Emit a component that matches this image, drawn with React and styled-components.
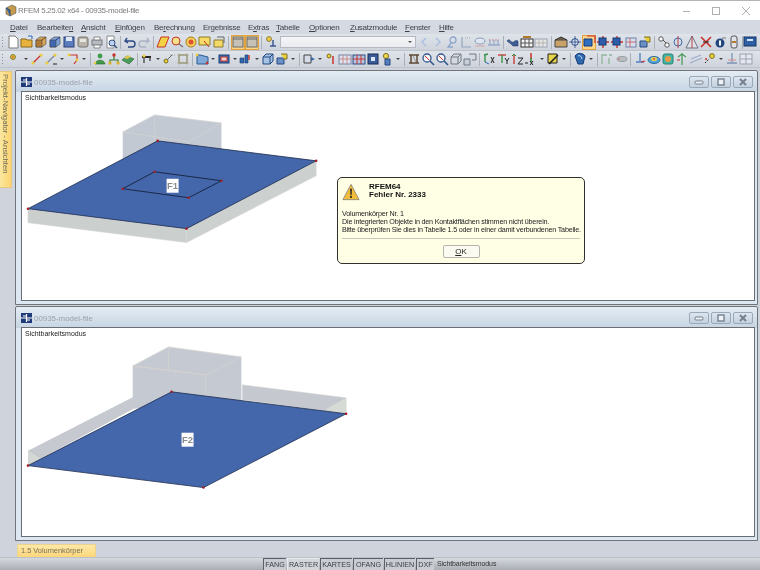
import React from 'react';
import styled, { createGlobalStyle } from 'styled-components';

const GlobalStyle = createGlobalStyle`
  html, body { margin: 0; padding: 0; background: #cfd4dc; }
  body { font-family: "Liberation Sans", Arial, sans-serif; overflow: hidden; }
`;

const Page = styled.div`
  width: 760px;
  height: 570px;
  display: flex;
  flex-direction: column;
  overflow: hidden;
  background: #cfd4dc;
  filter: blur(0.4px);
`;

const TitleBar = styled.div`
  height: 19px;
  flex: none;
  background: #fff;
  border-top: 1px solid #b4b4b4;
  display: flex;
  align-items: center;
  padding-left: 4px;
  color: #7d7d7d;
  font-size: 8px;
  letter-spacing: -0.35px;
`;

const AppTitle = styled.span`
  margin-left: 1px;
  flex: 1;
`;

const Caption = styled.div`
  width: 29px;
  height: 19px;
  display: flex;
  align-items: center;
  justify-content: center;
  margin-right: ${(p) => p.$gap || 0}px;
`;

const MenuBar = styled.div`
  height: 14px;
  flex: none;
  display: flex;
  align-items: center;
  padding-left: 10px;
  background: #d5dae2;
  font-size: 8px;
  letter-spacing: -0.25px;
  color: #3a3f48;
`;

const MenuItem = styled.span`
  width: ${(p) => p.$w}px;
  flex: none;
`;

const ToolRow = styled.div`
  height: 17px;
  flex: none;
  display: flex;
  align-items: center;
  padding-left: 1px;
  background: linear-gradient(#dfe3ea, #cfd4dc);
  border-bottom: 1px solid #bfc4cc;
  box-sizing: border-box;
  overflow: hidden;
`;

const Grip = styled.span`
  width: 5px;
  height: 11px;
  flex: none;
  margin-right: ${(p) => p.$after}px;
  background: repeating-linear-gradient(#8a8f98 0 1px, transparent 1px 3px) 1px 0 / 1px 100% no-repeat;
`;

const Slot = styled.span`
  width: 14px;
  height: 15px;
  flex: none;
  display: flex;
  align-items: center;
  justify-content: center;
  box-sizing: border-box;
  ${(p) => p.$on && 'background: #fbd58e; box-shadow: inset 0 0 0 1px #e2a23e;'}
`;

const Sep = styled.span`
  width: ${(p) => p.$w || 5}px;
  height: 13px;
  flex: none;
  background: linear-gradient(#aab0b9, #aab0b9) center / 1px 100% no-repeat;
`;

const Drop = styled.span`
  width: 8px;
  height: 15px;
  flex: none;
  display: flex;
  align-items: center;
  justify-content: center;
  &::after {
    content: '';
    border-left: 2px solid transparent;
    border-right: 2px solid transparent;
    border-top: 2px solid #444;
  }
`;

const Combo = styled.span`
  width: 136px;
  height: 12px;
  flex: none;
  margin: 0 1px 0 2px;
  background: linear-gradient(#f4f5f7, #e9ebef);
  border: 1px solid #b5bac2;
  box-sizing: border-box;
  display: flex;
  align-items: center;
  justify-content: flex-end;
  padding-right: 3px;
  &::after {
    content: '';
    border-left: 2px solid transparent;
    border-right: 2px solid transparent;
    border-top: 2px solid #555;
  }
`;

const Workspace = styled.div`
  flex: 1;
  min-height: 0;
  display: flex;
  padding: 2px 2px 2px 0;
  background: #cfd4dc;
`;

const SideRail = styled.div`
  width: 15px;
  flex: none;
`;

const SideTab = styled.div`
  width: 12px;
  height: 117px;
  margin-top: 1px;
  box-sizing: border-box;
  background: linear-gradient(90deg, #fbe7a0, #fdd56f);
  border: 1px solid #e5c880;
  border-left: none;
  writing-mode: vertical-rl;
  font-size: 7.7px;
  line-height: 11px;
  color: #6e6a58;
  padding-top: 2px;
  white-space: nowrap;
`;

const Stack = styled.div`
  flex: 1;
  min-width: 0;
  display: flex;
  flex-direction: column;
  gap: 1px;
`;

const Win = styled.section`
  flex: 1;
  min-height: 0;
  box-sizing: border-box;
  display: flex;
  flex-direction: column;
  border: 1px solid #70757c;
  border-radius: 2px 2px 0 0;
  background: linear-gradient(#e4ecf4 0, #c6d4e2 21px, #dce7f1 21px);
  padding: 0 2px 3px 5px;
`;

const WinHead = styled.div`
  height: 20px;
  flex: none;
  display: flex;
  align-items: center;
  padding-top: 2px;
  box-sizing: border-box;
  font-size: 7.9px;
  color: #9aa2ad;
`;

const WinName = styled.span`
  margin-left: 2px;
  flex: 1;
`;

const WinBtn = styled.span`
  width: 20px;
  height: 12px;
  flex: none;
  margin-right: 2px;
  box-sizing: border-box;
  border: 1px solid #9aa8b8;
  border-radius: 2px;
  background: linear-gradient(#dde6ef, #c3d0de);
  display: flex;
  align-items: center;
  justify-content: center;
`;

const Canvas = styled.div`
  position: relative;
  flex: 1;
  min-height: 0;
  background: #fff;
  border: 1px solid #6a6e74;
`;

const ModeLabel = styled.span`
  position: absolute;
  left: 3px;
  top: 2px;
  font-size: 7px;
  color: #222;
`;

const Scene = styled.svg`
  display: block;
  width: 100%;
  height: 100%;
`;

const Dialog = styled.div`
  position: absolute;
  left: 315px;
  top: 85px;
  width: 248px;
  height: 87px;
  box-sizing: border-box;
  background: #ffffe6;
  border: 1px solid #2f2f2f;
  border-radius: 5px;
  padding: 5px 4px 0 4px;
  display: flex;
  flex-direction: column;
  font-size: 7.2px;
  letter-spacing: -0.2px;
  color: #222;
`;

const DialogHead = styled.div`
  display: flex;
  gap: 9px;
  height: 27px;
  flex: none;
`;

const DialogTitle = styled.div`
  font-weight: 700;
  font-size: 8px;
  letter-spacing: 0;
  line-height: 8px;
  color: #111;
`;

const DialogLine = styled.div`
  line-height: 8px;
  white-space: nowrap;
`;

const Rule = styled.div`
  height: 1px;
  background: #c6c6bb;
  margin-top: 4px;
  flex: none;
`;

const OkButton = styled.div`
  align-self: center;
  width: 37px;
  height: 13px;
  margin-top: 6px;
  box-sizing: border-box;
  border: 1px solid #b4b4aa;
  border-radius: 2px;
  background: #fbfbf2;
  font-size: 8px;
  letter-spacing: 0;
  line-height: 11px;
  text-align: center;
`;

const TabStrip = styled.div`
  height: 14px;
  flex: none;
  padding-left: 17px;
  display: flex;
  align-items: flex-end;
  border-bottom: 1px solid #bcc1c9;
`;

const SheetTab = styled.div`
  width: 79px;
  height: 13px;
  box-sizing: border-box;
  background: linear-gradient(#fde8a6, #fdd67a);
  border: 1px solid #ecd28f;
  border-bottom: none;
  font-size: 7.4px;
  line-height: 12px;
  padding-left: 3px;
  color: #77705a;
  white-space: nowrap;
`;

const StatusBar = styled.div`
  height: 12px;
  flex: none;
  padding-left: 263px;
  display: flex;
  align-items: stretch;
  background: linear-gradient(#d6dadf, #a8adb3);
  font-size: 7.2px;
  line-height: 11px;
  color: #3c4046;
`;

const Pane = styled.span`
  width: ${(p) => p.$w}px;
  flex: none;
  box-sizing: border-box;
  text-align: center;
  border-top: 1px solid ${(p) => (p.$on ? '#e8eaed' : '#5c6066')};
  border-left: 1px solid ${(p) => (p.$on ? '#e8eaed' : '#5c6066')};
  background: ${(p) => (p.$on ? '#d3d7dc' : '#c9cdd3')};
  margin-right: 1px;
  white-space: nowrap;
  overflow: hidden;
`;

const StatusText = styled.span`
  margin-left: 2px;
  font-size: 7px;
  letter-spacing: -0.1px;
  color: #333;
`;

const nodes = (fill, line) => (
  <>
    <path d="M3 11 11 3" stroke={line} strokeWidth="1.3" />
    <circle cx="3" cy="11" r="1.6" fill={fill} />
    <circle cx="11" cy="3" r="1.6" fill={fill} />
  </>
);

const box = (a, b, c) => (
  <>
    <path d="M2 5 6 2h6v7l-4 3H2z" fill={a} stroke="#444" strokeWidth=".6" />
    <path d="M2 5h6v7H2z" fill={b} stroke="#444" strokeWidth=".6" />
    <path d="M8 5l4-3" stroke={c} />
  </>
);

const glyphs = {
  doc: <path d="M3 1h6l3 3v9H3z" fill="#fff" stroke="#7a7a7a" />,
  open: <><path d="M1 4h5l1 1h5v7H1z" fill="#e9b23c" stroke="#8a6a1c" /><path d="M8 1h4v3" fill="none" stroke="#2c66b5" /></>,
  boxO: box('#d9a55a', '#b27b35', '#6d4a1f'),
  boxB: box('#7fa2dc', '#3f68b3', '#1d3d78'),
  save: <><rect x="2" y="2" width="10" height="10" fill="#5c7cc0" stroke="#2b3f73" /><rect x="4" y="2" width="6" height="4" fill="#dfe6f4" /></>,
  gray: <><rect x="2" y="2" width="10" height="10" rx="2" fill="#b9b4aa" stroke="#77736b" /><rect x="4" y="4" width="6" height="3" fill="#e8e6e1" /></>,
  print: <><rect x="2" y="5" width="10" height="5" fill="#b8bcc4" stroke="#777" /><path d="M4 2h6v3H4zM4 10h6v3H4z" fill="#fff" stroke="#888" /></>,
  preview: <><path d="M3 1h7v12H3z" fill="#fff" stroke="#8a8a8a" /><circle cx="8" cy="8" r="3" fill="#bcd2ee" stroke="#33527f" /><path d="m10 10 3 3" stroke="#33527f" strokeWidth="1.4" /></>,
  undo: <path d="M4 3 2 6l3 2M2.5 6H9a3 3 0 0 1 0 6H5" fill="none" stroke="#2b4a86" strokeWidth="1.4" />,
  redo: <path d="M10 3l2 3-3 2M11.5 6H5a3 3 0 0 0 0 6h4" fill="none" stroke="#a9b2c2" strokeWidth="1.4" />,
  para: <path d="M5 2h8l-4 10H1z" fill="#f3d243" stroke="#c8322c" />,
  lens: <><circle cx="6" cy="6" r="4" fill="#f6e08a" stroke="#c8322c" /><path d="m9 9 4 3" stroke="#777" strokeWidth="1.5" /></>,
  target: <><circle cx="7" cy="7" r="5" fill="#f6d25a" stroke="#a87c1a" /><circle cx="7" cy="7" r="2.5" fill="#e0532f" /></>,
  note: <><path d="M1 2h11v8H1z" fill="#f6dc66" stroke="#8a7a2c" /><path d="m6 6 5 6" stroke="#c8322c" /></>,
  folder: <><path d="M2 5h9v7H2z" fill="#f4d868" stroke="#8a7a2c" /><path d="M5 2h7v6" fill="none" stroke="#666" /></>,
  panel: <><rect x="2" y="2" width="10" height="10" fill="#c5c1b6" stroke="#6b6b66" /><path d="M2 4h10" stroke="#6b6b66" /></>,
  bulb: <><circle cx="5" cy="4" r="2.4" fill="#f2cf4a" stroke="#8a7a2c" /><path d="M9 5v6M6 11h6" stroke="#3d5a92" strokeWidth="1.5" /></>,
  left: <path d="M9 3 5 7l4 4" fill="none" stroke="#a8bde0" strokeWidth="1.4" />,
  right: <path d="m5 3 4 4-4 4" fill="none" stroke="#a8bde0" strokeWidth="1.4" />,
  key: <><circle cx="8" cy="5" r="3" fill="none" stroke="#8ea7cc" strokeWidth="1.3" /><path d="M6 8 3 12h5" fill="none" stroke="#8ea7cc" strokeWidth="1.3" /></>,
  axis: <><path d="M3 2v10h9" fill="none" stroke="#93a6bf" strokeWidth="1.2" /><path d="M6 3h6" stroke="#a9a9a9" strokeDasharray="1 1" /></>,
  eye: <><ellipse cx="7" cy="6" rx="5" ry="3" fill="#dfe6f2" stroke="#8ea0bb" /><path d="M2 11h10" stroke="#d9a0a0" /></>,
  bars: <><path d="M1 10h12" stroke="#8aa0c5" strokeWidth="1.2" /><path d="M2 5h10" stroke="#c98a8a" strokeDasharray="2 1" /><path d="M3 5v5M7 5v5M11 5v5" stroke="#8aa0c5" /></>,
  wave: <path d="M1 6c2-3 3 0 5 1s3-3 6-1v5H7L5 9z" fill="#3e5f96" stroke="#1f3358" strokeWidth=".5" />,
  table: <><rect x="1" y="4" width="12" height="8" fill="#f5f5f5" stroke="#333" /><path d="M1 8h12M5 4v8M9 4v8" stroke="#555" /><path d="M3 2h8" stroke="#b5792c" strokeWidth="2" /></>,
  tableG: <><rect x="1" y="4" width="12" height="8" fill="#e6e6e6" stroke="#9aa3b2" /><path d="M1 8h12M5 4v8M9 4v8" stroke="#b5b5b5" /></>,
  roof: <><path d="M1 5h12v7H1z" fill="#c9a26a" stroke="#444" /><path d="M1 5 7 2l6 3" fill="#6b5a46" stroke="#333" /></>,
  gridO: <><circle cx="7" cy="7" r="3.4" fill="#d9e2f1" stroke="#2c4a86" /><path d="M7 1v12M1 7h12" stroke="#2c4a86" strokeWidth=".8" /></>,
  cubeB: <><path d="M2 4h8v7H2z" fill="#2f6fc2" stroke="#143a75" /><path d="M5 1h8v7" fill="none" stroke="#c8322c" strokeWidth="1.2" /></>,
  crossB: <><path d="M7 1v12M1 7h12" stroke="#c8322c" strokeWidth="1.4" /><rect x="3" y="3" width="7" height="7" fill="#2f5ea9" stroke="#143a75" /></>,
  latt: <><rect x="2" y="3" width="10" height="9" fill="#d7dff0" stroke="#6f82a8" /><path d="M2 7h10M6 3v9" stroke="#c86a6a" /></>,
  chain: <><circle cx="4" cy="4" r="2.2" fill="#fff" stroke="#555" /><circle cx="10" cy="10" r="2.2" fill="#fff" stroke="#555" /><path d="m6 5 3 3" stroke="#555" /></>,
  phi: <><circle cx="7" cy="7" r="4" fill="none" stroke="#3f6ea8" /><path d="M7 1v12" stroke="#b5424a" /></>,
  tri: <><path d="M7 1 13 13H1z" fill="#dfe2e8" stroke="#6c7280" /><path d="M7 1v12" stroke="#b5424a" /></>,
  xRed: <><path d="m2 2 10 10M12 2 2 12" stroke="#c8322c" strokeWidth="1.6" /><path d="M4 7h6" stroke="#222" /></>,
  info: <><circle cx="7" cy="8" r="4.5" fill="#24467e" /><rect x="6" y="5.5" width="2" height="5" fill="#fff" /><path d="M9 3h4" stroke="#777" /></>,
  tube: <><rect x="4" y="1" width="6" height="12" rx="2" fill="#dfe2e8" stroke="#555" /><path d="M5 7h4" stroke="#b5792c" strokeWidth="2" /></>,
  monitor: <><rect x="1" y="2" width="12" height="9" fill="#2d5fa5" stroke="#173463" /><path d="M4 5h6" stroke="#d5e3f7" strokeWidth="2" /></>,
  point: <><circle cx="5" cy="5" r="2.4" fill="#e9cf3d" stroke="#7e6f1f" /><circle cx="5" cy="5" r=".8" fill="#c8322c" /></>,
  line: nodes('#e9cf3d', '#c8322c'),
  lineMulti: <>{nodes('#e9cf3d', '#7b8aa3')}<path d="M9 12h4" stroke="#222" /></>,
  poly: <><path d="M3 3h8v5l-3 4" fill="none" stroke="#c8322c" strokeWidth="1.2" /><circle cx="3" cy="3" r="1.4" fill="#e9cf3d" /><circle cx="11" cy="8" r="1.4" fill="#e9cf3d" /></>,
  person: <><circle cx="7" cy="4" r="2.4" fill="#3f9d48" /><path d="M2 12c1-5 9-5 10 0z" fill="#3f9d48" stroke="#23602b" strokeWidth=".6" /><circle cx="2" cy="11" r="1.3" fill="#e9cf3d" /></>,
  tree: <><path d="M7 4v4M3 11V8h8v3" fill="none" stroke="#2f7d39" strokeWidth="1.2" /><circle cx="7" cy="3" r="1.7" fill="#c8322c" /><circle cx="3" cy="11" r="1.7" fill="#d8b52e" /><circle cx="11" cy="11" r="1.7" fill="#d8b52e" /></>,
  leaf: <><path d="M1 8 6 4l7 3-5 5z" fill="#4a9c5a" stroke="#256135" strokeWidth=".6" /><path d="M3 6l4-3 3 2-4 2z" fill="#e4c54a" /></>,
  support: <><path d="M2 5h9" stroke="#222" strokeWidth="2" /><path d="M4 5v6M10 5v4" stroke="#444" strokeWidth="1.3" /><circle cx="4" cy="4" r="1.5" fill="#e9cf3d" /></>,
  load: <><circle cx="4" cy="9" r="2" fill="#e9cf3d" stroke="#7e6f1f" /><path d="m5 8 5-5" stroke="#666" /><path d="M8 3h5" stroke="#999" strokeDasharray="1 1" /></>,
  frameY: <><rect x="3" y="3" width="8" height="8" fill="none" stroke="#8d8a65" strokeWidth="1.2" /><path d="M1 3h12M1 11h12M3 1v12M11 1v12" stroke="#a8a684" strokeWidth=".6" /></>,
  planeB: <><path d="M2 3h3l8 2v7H2z" fill="#7ea9d8" stroke="#2d5a92" /><circle cx="2" cy="3" r="1.4" fill="#e9cf3d" /><circle cx="12" cy="11" r="1.3" fill="#c8322c" /></>,
  squareR: <><rect x="2" y="3" width="10" height="8" fill="#3f71b0" stroke="#1a3d70" /><rect x="4" y="5" width="6" height="4" fill="#f1d2d2" stroke="#c8322c" /></>,
  beams: <><path d="M1 6h4v5H1zM6 3h3v8H6z" fill="#2f66ad" stroke="#173d72" strokeWidth=".6" /><path d="M10 3v5" stroke="#c8322c" strokeWidth="1.4" /></>,
  cubeL: <path d="M2 5 5 2h7v7l-3 3H2zM2 5h7v7M9 5l3-3" fill="#a6c3e6" stroke="#21497f" />,
  cubeY: <><path d="M2 6h7v6H2z" fill="#6c90c4" stroke="#274a80" /><path d="M6 2h6v5H9" fill="#e9cf3d" stroke="#7e6f1f" /></>,
  arrowB: <><path d="M2 3h7v8H2z" fill="#d5dce8" stroke="#444" /><path d="M9 5l4 2-4 2z" fill="#3666a8" /></>,
  pin: <><circle cx="5" cy="4" r="2" fill="#e9cf3d" stroke="#7e6f1f" /><path d="M9 4v8" stroke="#c8322c" strokeWidth="1.5" /></>,
  grid1: <><rect x="1" y="3" width="12" height="9" fill="#dce4f2" stroke="#7586a6" /><path d="M5 3v9M9 3v9M1 7h12" stroke="#c88" /></>,
  grid2: <><rect x="1" y="3" width="12" height="9" fill="#b6c6e2" stroke="#2c4a86" /><path d="M5 3v9M9 3v9M1 7h12" stroke="#c8322c" /></>,
  save2: <><rect x="2" y="2" width="10" height="10" fill="#3a5c99" stroke="#152b57" /><rect x="5" y="5" width="4" height="4" fill="#dbe4f4" /></>,
  tank: <><circle cx="6" cy="4" r="2.6" fill="#efd64f" stroke="#7e6f1f" /><path d="M5 7h5v6H5z" fill="#5580bd" stroke="#27477a" /></>,
  pillar: <><path d="M2 3h10M2 11h10M4 3v8M10 3v8" stroke="#5d4a35" strokeWidth="1.5" /><path d="m6 4 3 6" stroke="#999" /></>,
  lensB: <><circle cx="6" cy="6" r="4" fill="#f8f8f8" stroke="#32558d" strokeWidth="1.3" /><path d="m9 9 4 4" stroke="#32558d" strokeWidth="1.6" /><path d="M4 4l4 4" stroke="#c8322c" /></>,
  cube3: <path d="M2 5 5 2h7v7l-3 3H2zM2 5h7v7M9 5l3-3" fill="#d6d9de" stroke="#707a88" />,
  cube4: <><path d="M1 7h6v6H1z" fill="#c9ced6" stroke="#707a88" /><path d="M6 2h7v6H9" fill="#d6d9de" stroke="#707a88" /></>,
  axX: <><path d="M3 2v8M2 3l4-1" stroke="#2e8f3e" strokeWidth="1.3" /><path d="M3 10l4 2" stroke="#2f66ad" /><path d="M9 5l3 6M12 5l-3 6" stroke="#222" /></>,
  axY: <><path d="M2 3h8" stroke="#c8322c" strokeWidth="1.3" /><path d="M6 3v8" stroke="#2e8f3e" strokeWidth="1.3" /><path d="m9 6 2 3 2-3M11 9v3" fill="none" stroke="#222" /></>,
  axZ: <><path d="M4 2v10" stroke="#c8322c" strokeWidth="1.3" /><path d="M2 4l2-2 2 2" fill="none" stroke="#2e8f3e" /><path d="M8 6h5l-5 6h5" fill="none" stroke="#222" /></>,
  axN: <><path d="M7 1v6" stroke="#c8322c" strokeWidth="1.5" /><path d="M7 6v4" stroke="#2e8f3e" strokeWidth="1.5" /><path d="M1 11h3M6 9l3 4M9 9l-3 4" stroke="#222" /></>,
  dim: <><path d="M2 2h9v9H2z" fill="#e6d54a" stroke="#222" /><path d="M3 12 12 3" stroke="#222" strokeWidth="1.6" /></>,
  bag: <><path d="M2 4c3-4 8-3 10 0l-2 8H5z" fill="#2f69ad" stroke="#143a75" /><path d="M5 4c2-1 3 0 4 3" fill="none" stroke="#cfe0f4" /></>,
  rfG: <path d="M2 12V3h5M9 3h3M9 12V6" fill="none" stroke="#8fb59a" strokeWidth="1.3" />,
  pipe: <><ellipse cx="8" cy="7" rx="5" ry="2.5" fill="#b9bcc1" stroke="#9a9da3" /><circle cx="5" cy="7" r="1" fill="#c88" /></>,
  beamB: <><path d="M7 1v8M3 10h8" stroke="#4f7ec0" strokeWidth="1.3" /><path d="M8 10l4-1" stroke="#c8322c" /></>,
  hill: <><ellipse cx="7" cy="8" rx="6" ry="3.5" fill="#52a3d8" stroke="#2e6ea1" /><ellipse cx="7" cy="7" rx="3" ry="2" fill="#efcf4d" /><circle cx="7" cy="7" r="1" fill="#d9482e" /></>,
  heat: <><rect x="2" y="2" width="10" height="10" rx="2" fill="#3fb5a5" stroke="#2a8074" /><circle cx="7" cy="7" r="3" fill="#e9984a" /></>,
  arrowsG: <><path d="M7 1v12M3 5l4-3 4 3" fill="none" stroke="#4e9d60" strokeWidth="1.3" /><path d="M2 8h3" stroke="#c8322c" /></>,
  stairs: <path d="m1 11 12-5M2 7l10-4" stroke="#9faccd" strokeWidth="1.3" />,
  dots: <><circle cx="9" cy="4" r="2.4" fill="#e9cf3d" stroke="#7e6f1f" /><path d="m2 11 4-4" stroke="#222" strokeDasharray="1.5 1" /><circle cx="3" cy="7" r="1" fill="#c8322c" /></>,
  beamR: <><path d="M7 1v9M2 11h10" stroke="#7b93b8" strokeWidth="1.3" /><path d="M3 8h8" stroke="#d98a8a" /></>,
  cells: <><rect x="1" y="2" width="12" height="10" fill="#e5e8ee" stroke="#9aa3b2" /><path d="M7 2v10M1 7h12" stroke="#9aa3b2" /></>,
};

const ToolIcon = ({ name }) => (
  <svg width="14" height="14" viewBox="0 0 14 14" aria-hidden="true">{glyphs[name]}</svg>
);

// '|' = separator, '|8' = wider separator, 'v' = dropdown arrow, '*name' = pressed button, 'combo' = input
const rowOne = 'doc open boxO boxB save gray print preview | undo redo | para lens target note folder | *panel *panel | bulb combo left right key axis eye bars | wave table tableG |6 roof gridO *cubeB crossB crossB latt cubeY | chain phi tri xRed info tube |2 monitor'.split(' ');
const rowTwo = 'point v line lineMulti v poly v | person tree leaf | support v load frameY | planeB v squareR v beams v cubeL cubeY v | arrowB v pin grid1 grid2 save2 tank v | pillar lensB lensB cube3 cube4 | axX axY axZ axN v dim v | bag v | rfG pipe | beamB hill heat arrowsG stairs dots v beamR cells'.split(' ');

const Tools = ({ items, first }) => (
  <ToolRow>
    <Grip $after={first} />
    {items.map((item, i) => {
      if (item === 'combo') return <Combo key={i} />;
      if (item === 'v') return <Drop key={i} />;
      if (item[0] === '|') return <Sep key={i} $w={Number(item.slice(1)) || 5} />;
      if (item[0] === '*') return <Slot key={i} $on><ToolIcon name={item.slice(1)} /></Slot>;
      return <Slot key={i}><ToolIcon name={item} /></Slot>;
    })}
  </ToolRow>
);

const menus = [
  ['D', 'atei', 27, ''],
  ['Bearbeite', 'n', 44, 'mid'],
  ['A', 'nsicht', 34, ''],
  ['E', 'infügen', 39, ''],
  ['Be', 'r', 49, 'echnung'],
  ['Er', 'g', 45, 'ebnisse'],
  ['E', 'x', 28, 'tras'],
  ['T', 'abelle', 33, ''],
  ['O', 'ptionen', 41, ''],
  ['Z', 'usatzmodule', 55, ''],
  ['F', 'enster', 34, ''],
  ['H', 'ilfe', 24, ''],
];

const MenuLabel = ({ a, b, tail }) => {
  if (tail && tail !== 'mid') return <>{a}<u>{b}</u>{tail}</>;
  if (tail === 'mid') return <>{a}<u>{b}</u></>;
  return <><u>{a}</u>{b}</>;
};

const Logo = () => (
  <svg width="11" height="10" viewBox="0 0 11 10" aria-hidden="true">
    <rect width="11" height="10" fill="#1f3a7a" />
    <path d="M0 5h11M5.5 1v8" stroke="#fff" strokeWidth="1.2" />
    <path d="M2 3h3M6 7h3" stroke="#fff" />
  </svg>
);

const Corner = ({ x, y, r = 1.3 }) => <circle cx={x} cy={y} r={r} fill="#a51f26" />;

const TopScene = () => (
  <Scene viewBox="21 92 734 212" preserveAspectRatio="xMinYMin slice">
    <path d="M122 132 154 115 221 123 221 150 157 141 122 160z" fill="#c3c9d2" />
    <path d="M122 132 154 115 221 123 188 142zM154 115V141M188 142V146" fill="none" stroke="#d2d2d2" strokeWidth=".7" />
    <path d="M27 209 186 229V243L27 223z" fill="#cbcfcd" stroke="#d4d6d5" strokeWidth=".6" />
    <path d="M186 229 316 161V176L186 243z" fill="#ccd0ce" stroke="#d4d6d5" strokeWidth=".6" />
    <path d="M157 141 316 161 186 229 27 209z" fill="#4466ab" stroke="#1d2c4b" strokeWidth=".8" />
    <path d="M154 172 221 181 188 198 122 189z" fill="#4466ab" stroke="#14213c" strokeWidth=".9" />
    <Corner x={157} y={141} /><Corner x={316} y={161} /><Corner x={186} y={229} /><Corner x={27} y={209} />
    <Corner x={154} y={172} /><Corner x={221} y={181} /><Corner x={188} y={198} /><Corner x={122} y={189} />
    <rect x="166" y="179" width="12" height="14" fill="#fff" />
    <text x="172" y="189.5" fontSize="9.5" fontWeight="700" fill="#8a8d90" textAnchor="middle" fontFamily="Liberation Sans, sans-serif">F1</text>
  </Scene>
);

const BottomScene = () => (
  <Scene viewBox="21 328 734 212" preserveAspectRatio="xMinYMin slice">
    <path d="M27 451 133 397V409L27 466z" fill="#c6cad0" />
    <path d="M27 451 40 459 27 466z" fill="#d3d8d5" />
    <path d="M242 385 346 398V414L242 400z" fill="#c5c9cf" stroke="#d5d5d5" strokeWidth=".5" />
    <path d="M346 398V414L325 410z" fill="#d6dbd6" />
    <path d="M132 366 168 347 241 357V402L132 409z" fill="#c5cad2" />
    <path d="M132 366 168 347 241 357 205 375zM132 366 205 375V402M168 347V372" fill="none" stroke="#d5d2d0" strokeWidth=".7" />
    <path d="M171 392 346 414 203 488 27 466z" fill="#4466ab" stroke="#1d2c4b" strokeWidth=".8" />
    <Corner x={171} y={392} /><Corner x={346} y={414} /><Corner x={203} y={488} /><Corner x={27} y={466} />
    <rect x="181" y="433" width="12" height="14" fill="#fff" />
    <text x="187" y="443.5" fontSize="9.5" fontWeight="700" fill="#8a8d90" textAnchor="middle" fontFamily="Liberation Sans, sans-serif">F2</text>
  </Scene>
);

const WinIcon = ({ kind }) => (
  <svg width="10" height="8" viewBox="0 0 10 8" aria-hidden="true">
    {kind === 'min' && <rect x="1" y="3" width="8" height="3" rx="1" fill="#eef2f6" stroke="#75818f" />}
    {kind === 'max' && <rect x="2" y="1" width="6" height="6" fill="#eef2f6" stroke="#75818f" strokeWidth="1.4" />}
    {kind === 'close' && <path d="m2 1 6 6M8 1 2 7" stroke="#75818f" strokeWidth="2" />}
  </svg>
);

const ModelWindow = ({ children }) => (
  <Win>
    <WinHead>
      <Logo />
      <WinName>00935-model-file</WinName>
      <WinBtn><WinIcon kind="min" /></WinBtn>
      <WinBtn><WinIcon kind="max" /></WinBtn>
      <WinBtn><WinIcon kind="close" /></WinBtn>
    </WinHead>
    <Canvas>{children}</Canvas>
  </Win>
);

const App = () => (
  <>
    <GlobalStyle />
    <Page>
      <TitleBar>
        <svg width="13" height="13" viewBox="0 0 13 13" aria-hidden="true">
          <path d="M2 4 8 1l4 2v6l-6 3-4-2z" fill="#c59a4c" stroke="#555" strokeWidth=".6" />
          <path d="M2 4l4 2v6" fill="#3e6ba6" stroke="#2b4a7a" />
        </svg>
        <AppTitle>RFEM 5.25.02 x64 - 00935-model-file</AppTitle>
        <Caption>
          <svg width="10" height="10" aria-hidden="true"><path d="M1 5.5h7" stroke="#b0b0b0" /></svg>
        </Caption>
        <Caption $gap={1}>
          <svg width="10" height="10" aria-hidden="true"><rect x="1.5" y="1.5" width="7" height="7" fill="none" stroke="#b0b0b0" /></svg>
        </Caption>
        <Caption>
          <svg width="10" height="10" aria-hidden="true"><path d="m1 1 8 8M9 1 1 9" stroke="#b0b0b0" /></svg>
        </Caption>
      </TitleBar>
      <MenuBar>
        {menus.map(([a, b, w, tail]) => (
          <MenuItem key={a + b} $w={w}><MenuLabel a={a} b={b} tail={tail} /></MenuItem>
        ))}
      </MenuBar>
      <Tools items={rowOne} first={0} />
      <Tools items={rowTwo} first={2} />
      <Workspace>
        <SideRail>
          <SideTab>Projekt-Navigator - Ansichten</SideTab>
        </SideRail>
        <Stack>
          <ModelWindow>
            <TopScene />
            <ModeLabel>Sichtbarkeitsmodus</ModeLabel>
            <Dialog>
              <DialogHead>
                <svg width="18" height="18" viewBox="0 0 20 19" aria-hidden="true">
                  <path d="M10 1 19 18H1z" fill="#f0bc3a" stroke="#8d8a80" />
                  <path d="M9 6h2l-.4 7h-1.2z" fill="#222" />
                  <rect x="9" y="14" width="2" height="2" fill="#222" />
                </svg>
                <DialogTitle>RFEM64<br />Fehler Nr. 2333</DialogTitle>
              </DialogHead>
              <DialogLine>Volumenkörper Nr. 1</DialogLine>
              <DialogLine>Die integrierten Objekte in den Kontaktflächen stimmen nicht überein.</DialogLine>
              <DialogLine>Bitte überprüfen Sie dies in Tabelle 1.5 oder in einer damit verbundenen Tabelle.</DialogLine>
              <Rule />
              <OkButton><u>O</u>K</OkButton>
            </Dialog>
          </ModelWindow>
          <ModelWindow>
            <BottomScene />
            <ModeLabel>Sichtbarkeitsmodus</ModeLabel>
          </ModelWindow>
        </Stack>
      </Workspace>
      <TabStrip>
        <SheetTab>1.5 Volumenkörper</SheetTab>
      </TabStrip>
      <StatusBar>
        <Pane $w={23}>FANG</Pane>
        <Pane $w={32} $on>RASTER</Pane>
        <Pane $w={32}>KARTES</Pane>
        <Pane $w={30}>OFANG</Pane>
        <Pane $w={31}>HLINIEN</Pane>
        <Pane $w={18}>DXF</Pane>
        <StatusText>Sichtbarkeitsmodus</StatusText>
      </StatusBar>
    </Page>
  </>
);

export default App;
